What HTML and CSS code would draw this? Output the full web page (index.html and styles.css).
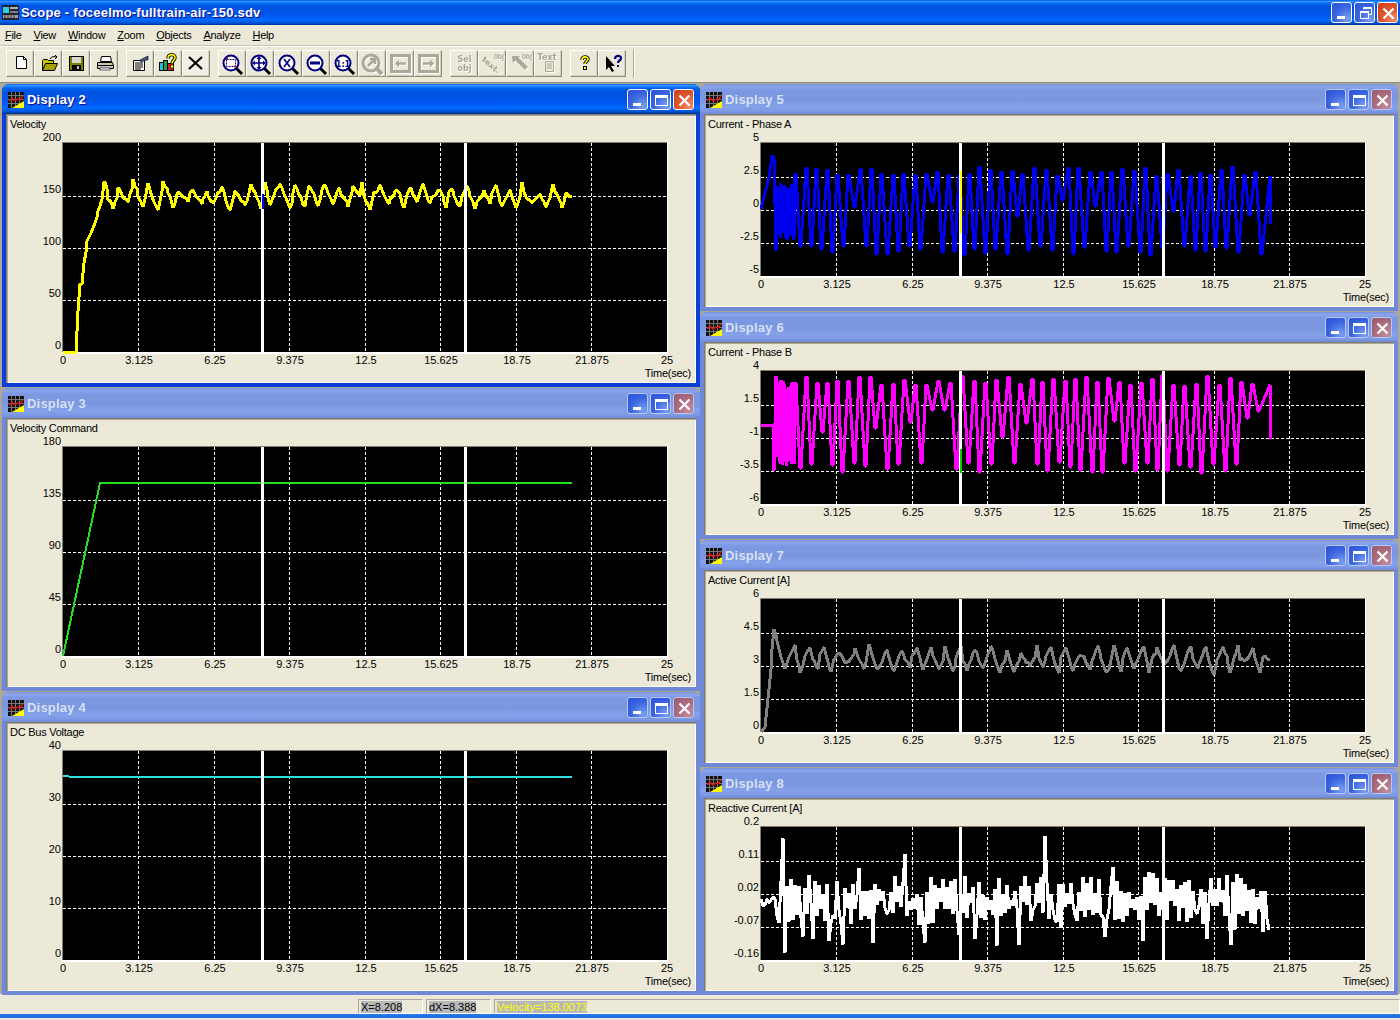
FILE: index.html
```html
<!DOCTYPE html>
<html lang="en">

<head>
    <meta charset="utf-8">
    <title>Scope - foceelmo-fulltrain-air-150.sdv</title>
    <link rel="stylesheet" href="styles.css">
</head>

<body>
    <svg class="defs" width="0" height="0">
        <symbol id="lens" viewBox="0 0 24 24">
            <path d="M15 16l6 6" stroke="#000" stroke-width="3" fill="none" />
            <circle cx="10" cy="11" r="7.5" fill="#fff" stroke="#000080" stroke-width="2" />
        </symbol>
        <symbol id="logo" viewBox="0 0 16 16">
            <rect width="16" height="16" fill="#111" />
            <path d="M0 3.5h16M0 7.5h16M0 11.5h16M3.5 0v16M7.5 0v16M11.5 0v16" stroke="#777" />
            <path d="M16 9v7H4z" fill="#ff0" />
            <path d="M1 9l3-3 3 3 3-2 2 1 3-4" stroke="#e01010" stroke-width="1.5" fill="none" />
        </symbol>
    </svg>

    <header class="titlebar">
        <svg class="app-icon" width="17" height="15" viewBox="0 0 17 15">
            <rect width="17" height="15" fill="#223" />
            <rect x="1" y="2" width="6" height="6" fill="#30d0d8" />
            <rect x="8" y="2" width="8" height="2" fill="#b0b0b0" />
            <rect x="8" y="6" width="8" height="2" fill="#808080" />
            <rect x="1" y="10" width="15" height="3" fill="#a0a0a0" />
            <path d="M3 10v3M6 10v3M9 10v3M12 10v3" stroke="#333" />
        </svg>
        <span class="app-title">Scope - foceelmo-fulltrain-air-150.sdv</span>
        <div class="controls app-controls">
            <button class="ctl"><svg width="21" height="21"><rect x="5" y="13" width="8" height="3" fill="#fff" /></svg></button>
            <button class="ctl"><svg width="21" height="21" fill="none" stroke="#fff"><rect x="5.5" y="8.5" width="8" height="7" /><path d="M5.5 9.5h8" /><path d="M8.5 6.5v-2h8v7h-3M8.5 5.5h8" /></svg></button>
            <button class="ctl ctl-close"><svg width="21" height="21"><path d="M5.5 5.5l10 10M15.5 5.5l-10 10" stroke="#fff" stroke-width="2.2" /></svg></button>
        </div>
    </header>

    <nav class="menu">
        <span><u>F</u>ile</span>
        <span><u>V</u>iew</span>
        <span><u>W</u>indow</span>
        <span><u>Z</u>oom</span>
        <span><u>O</u>bjects</span>
        <span><u>A</u>nalyze</span>
        <span><u>H</u>elp</span>
    </nav>

    <div class="toolbar">
        <div class="tool-group">
            <button class="tool"><svg viewBox="0 0 24 24"><path d="M7.5 4.5h7l3 3v9h-10z" fill="#fff" stroke="#000" /><path d="M14.500 4.500v3h3" fill="none" stroke="#000" /></svg></button>
            <button class="tool"><svg viewBox="0 0 24 24"><path d="M5.500 18.500v-10l1-1h4l1 1h5v3" fill="#c8c800" stroke="#000" /><path d="M5.500 18.500l3-7h12l-3 7z" fill="#a8a000" stroke="#000" /><path d="M13 7c1-2 3-3 6-2M18 3l2 2-2 2" fill="none" stroke="#000" /></svg></button>
            <button class="tool"><svg viewBox="0 0 24 24"><rect x="4.500" y="4.500" width="14" height="14" fill="#808000" stroke="#000" /><rect x="7" y="5" width="9" height="6" fill="#d8d8d0" /><rect x="7" y="13" width="9" height="5" fill="#000" /><rect x="12" y="14" width="2" height="3" fill="#c0c0c0" /></svg></button>
            <button class="tool"><svg viewBox="0 0 24 24"><path d="M8.500 4.500h9l1 5h-11z" fill="#fff" stroke="#000" /><path d="M4.500 10.500h15l1 3v3h-16v-3z" fill="#c8c8c0" stroke="#000" /><path d="M5 13.500h15" stroke="#000" /><rect x="7" y="16" width="10" height="2" fill="#fff" stroke="#000" stroke-width=".6" /><rect x="15" y="11.500" width="3" height="1" fill="#e0d000" /></svg></button>
        </div>
        <div class="tool-group">
            <button class="tool"><svg viewBox="0 0 24 24"><path d="M4.500 8.500h11v10h-11z" fill="#fff" stroke="#000" /><path d="M6 11h8M6 13h8M6 15h8M6 17h6" stroke="#000" /><path d="M11 8l6-3 2-1v4h-2l-5 2z" fill="#405890" stroke="#000" stroke-width=".6" /></svg></button>
            <button class="tool"><svg viewBox="0 0 24 24"><rect x="2.500" y="10.500" width="4" height="8" fill="#20c0d8" stroke="#000" /><rect x="6.500" y="8.500" width="4" height="10" fill="#20a040" stroke="#000" /><rect x="10.500" y="11.500" width="6" height="7" fill="#e01040" stroke="#000" /><path d="M11 6.500c0-5 7-5 7-1 0 3-3 3-3 6" fill="none" stroke="#000" stroke-width="3.400" /><path d="M11 6.500c0-5 7-5 7-1 0 3-3 3-3 6" fill="none" stroke="#ff0" stroke-width="1.600" /><rect x="13.500" y="13" width="3" height="3" fill="#ff0" stroke="#000" stroke-width=".6" /></svg></button>
            <button class="tool tool-x"><svg viewBox="0 0 24 24"><path d="M4 5l13 12M17 5L4 17" stroke="#000" stroke-width="2.200" /></svg></button>
        </div>
        <div class="tool-group">
            <button class="tool"><svg viewBox="0 0 24 24"><use href="#lens" /><rect x="5.500" y="7.500" width="9" height="7" fill="none" stroke="#000080" stroke-dasharray="2 1" /><path d="M5 6.500h2M6 5.500v2M13 14.500h2M14 13.500v2" stroke="#d00000" /></svg></button>
            <button class="tool"><svg viewBox="0 0 24 24"><use href="#lens" /><path d="M10 5v12M4 11h12" stroke="#000080" stroke-width="1.600" /><path d="M10 4l2.500 3h-5zM10 18l2.500-3h-5zM3 11l3-2.500v5zM17 11l-3-2.500v5z" fill="#000080" /></svg></button>
            <button class="tool"><svg viewBox="0 0 24 24"><use href="#lens" /><path d="M7 7l6 8M13 7l-6 8" stroke="#000080" stroke-width="1.600" /></svg></button>
            <button class="tool"><svg viewBox="0 0 24 24"><use href="#lens" /><rect x="5" y="9.500" width="10" height="3" fill="#000080" /></svg></button>
            <button class="tool"><svg viewBox="0 0 24 24"><use href="#lens" /><text x="10" y="14.500" class="tool-text tool-navy">1:1</text></svg></button>
            <button class="tool tool-off"><svg viewBox="0 0 24 24"><path d="M15 16l6 6" stroke="#aca899" stroke-width="4" /><circle cx="10" cy="11" r="8" fill="none" stroke="#aca899" stroke-width="3" /><path d="M7 14l6-6M9 7h5v5" fill="none" stroke="#aca899" stroke-width="2.500" /></svg></button>
            <button class="tool tool-off"><svg viewBox="0 0 24 24"><rect x="2.500" y="3.500" width="18" height="16" fill="none" stroke="#aca899" stroke-width="3" /><path d="M17 11.500H9" stroke="#aca899" stroke-width="2.500" /><path d="M6 11.500l4-4v8z" fill="#aca899" /></svg></button>
            <button class="tool tool-off"><svg viewBox="0 0 24 24"><rect x="2.500" y="3.500" width="18" height="16" fill="none" stroke="#aca899" stroke-width="3" /><path d="M6 11.500h8" stroke="#aca899" stroke-width="2.500" /><path d="M17 11.500l-4-4v8z" fill="#aca899" /></svg></button>
        </div>
        <div class="tool-group">
            <button class="tool tool-off"><svg viewBox="0 0 24 24"><text x="11.500" y="10" class="tool-text tool-grey">Sel</text><text x="11.500" y="19" class="tool-text tool-grey">obj</text></svg></button>
            <button class="tool tool-off"><svg viewBox="0 0 24 24"><text x="9" y="15" class="tool-text tool-grey" transform="rotate(42 9 12)">text</text><path d="M3 8l14 13" stroke="#aca899" /><text x="18" y="7" class="tool-tiny">0bj</text></svg></button>
            <button class="tool tool-off"><svg viewBox="0 0 24 24"><path d="M6 8l3-3 10 10-3 3z" fill="#aca899" /><path d="M3 4h8l-7 7z" fill="#aca899" /><text x="18" y="7" class="tool-tiny">0bj</text></svg></button>
            <button class="tool tool-off"><svg viewBox="0 0 24 24"><text x="10" y="8" class="tool-text tool-grey">Text</text><path d="M8.500 9.500h8v10h-8z" fill="#ece9d8" stroke="#aca899" /><path d="M10 12h5M10 14h5M10 16h5" stroke="#aca899" /></svg></button>
        </div>
        <div class="tool-group tool-end">
            <button class="tool"><svg viewBox="0 0 24 24"><path d="M9 8c0-4 6-4 6-1 0 2.500-3 2.500-3 5" fill="none" stroke="#000" stroke-width="3.400" /><path d="M9 8c0-4 6-4 6-1 0 2.500-3 2.500-3 5" fill="none" stroke="#ff0" stroke-width="1.600" /><rect x="10.500" y="14.500" width="3" height="3" fill="#ff0" stroke="#000" /></svg></button>
            <button class="tool"><svg viewBox="0 0 24 24"><path d="M5 4v14l3-3 3 5 2-1-3-5h4z" fill="#000" /><path d="M14 7c0-4 6-4 6-1 0 3-3 2-3 5" fill="none" stroke="#000080" stroke-width="2.200" /><rect x="16" y="13" width="2" height="2" fill="#000080" /></svg></button>
        </div>
    </div>

    <main class="workspace">
        <section class="column column-left"></section>
        <section class="column column-right"></section>
    </main>

    <footer class="statusbar">
        <div class="cell cell-x"><span>X=8.208</span></div>
        <div class="cell cell-x"><span>dX=8.388</span></div>
        <div class="cell cell-value"><span>Velocity=138.0073</span></div>
    </footer>
    <div class="taskstrip"></div>

    <template>
        <article class="win">
            <div class="win-title">
                <svg class="win-icon" width="16" height="16"><use href="#logo" /></svg>
                <h2></h2>
                <div class="controls">
                    <button class="ctl"><svg width="21" height="21"><rect x="5" y="13" width="8" height="3" fill="#fff" /></svg></button>
                    <button class="ctl"><svg width="21" height="21" fill="none" stroke="#fff"><rect x="4.500" y="5.500" width="12" height="10" /><path d="M4.500 6.500h12M4.500 7.500h12" /></svg></button>
                    <button class="ctl ctl-close"><svg width="21" height="21"><path d="M5.500 5.500l10 10M15.500 5.500l-10 10" stroke="#fff" stroke-width="2.200" /></svg></button>
                </div>
            </div>
            <div class="client"></div>
        </article>
    </template>

    <script src="app.js"></script>
</body>

</html>
```
FILE: styles.css
```css
* {
    box-sizing: border-box;
}

body {
    margin: 0;
    width: 1400px;
    height: 1020px;
    overflow: hidden;
    background-color: #ece9d8;
    font-family: "Liberation Sans", Arial, sans-serif;
    font-size: 11px;
    color: #000;
}

.defs {
    display: block;
    height: 0;
}

button {
    padding: 0;
    margin: 0;
    font: inherit;
}

svg {
    display: block;
}

/* main window */
.titlebar {
    display: flex;
    align-items: center;
    height: 25px;
    padding: 0 2px 1px 2px;
    background: linear-gradient(180deg, #0058ee 0%, #3593ff 6%, #127dff 10%, #0262ee 16%, #0057e5 22%, #0054e3 30%, #0055eb 58%, #005bf5 68%, #026afe 78%, #0062ef 86%, #0052d6 92%, #0040ab 96%, #003092 100%);
}

.app-title {
    margin-left: 2px;
    color: #fff;
    font-size: 13px;
    font-weight: bold;
    letter-spacing: 0.2px;
    text-shadow: 1px 1px #0f1089;
    white-space: nowrap;
}

.controls {
    display: flex;
    gap: 2px;
    margin-left: auto;
}

.ctl {
    width: 21px;
    height: 21px;
    border: 1px solid #fff;
    border-radius: 3px;
    background: radial-gradient(circle at 80% 85%, #7c9ff0 0%, #3a66e0 55%, #2a50d8 100%);
}

.ctl-close {
    background: radial-gradient(circle at 80% 85%, #f09070 0%, #e05a30 45%, #c83c18 100%);
}

.menu {
    display: flex;
    gap: 12px;
    align-items: center;
    height: 20px;
    padding-left: 5px;
    font-size: 11px;
    letter-spacing: -0.3px;
}

.toolbar {
    display: flex;
    gap: 8px;
    height: 37px;
    padding: 4px 0 0 6px;
    border-top: 1px solid #c8c5b4;
    box-shadow: inset 0 1px #fff;
}

.tool-group {
    display: flex;
}

.tool-end {
    padding-right: 7px;
    margin-top: -1px;
    height: 29px;
    padding-top: 1px;
    border-right: 1px solid #aca899;
    box-shadow: 1px 0 #fff;
}

.tool {
    width: 28px;
    height: 27px;
    padding: 1px 2px;
    background-color: #ece9d8;
    border: 1px solid;
    border-color: #fff #8e8b7a #8e8b7a #fff;
    box-shadow: inset -1px -1px #d4d0bf;
}

.tool svg {
    width: 24px;
    height: 24px;
    overflow: visible;
}

.tool-x {
    background-color: #f1efe4;
}

.tool-off svg {
    filter: drop-shadow(1px 1px 0 #fff);
}

.tool-text {
    font-family: "DejaVu Sans", sans-serif;
    font-size: 8px;
    font-weight: bold;
    text-anchor: middle;
}

.tool-navy {
    fill: #000080;
}

.tool-grey {
    fill: #a8a494;
}

.tool-tiny {
    font-size: 7px;
    font-weight: bold;
    fill: #a8a494;
    text-anchor: middle;
}

/* MDI children */
.workspace {
    display: grid;
    grid-template-columns: 698px 698px;
    height: 912px;
    padding: 1px 2px 0;
    background-color: #aca899;
    border-top: 1px solid #8e8b7a;
}

.column {
    display: flex;
    flex-direction: column;
    gap: 1px;
}

.win {
    display: flex;
    flex-direction: column;
    padding: 0 4px 4px;
    border-radius: 7px 7px 0 0;
    background-color: #7088d8;
}

.column-left .win {
    height: 303px;
}

.column-right .win {
    height: 227px;
}

.win-title {
    display: flex;
    align-items: center;
    flex: none;
    height: 30px;
    margin: 0 -4px;
    padding: 1px 6px 0 6px;
    border-radius: 7px 7px 0 0;
    background: linear-gradient(180deg, #7a8fdc 0%, #8aa6ec 8%, #7c98e2 20%, #7a97df 55%, #84a2ea 75%, #7d9ae4 90%, #7088d4 100%);
}

.win-icon {
    flex: none;
}

.win-title h2 {
    margin: 0 0 0 3px;
    color: #d8e0f6;
    font-size: 13px;
    font-weight: bold;
    letter-spacing: 0.2px;
}

.win-active {
    background-color: #0a3fd8;
}

.win-active .win-title {
    background: linear-gradient(180deg, #0058ee 0%, #3593ff 5%, #127dff 9%, #0262ee 14%, #0057e5 22%, #0054e3 30%, #0055eb 58%, #005bf5 68%, #026afe 78%, #0062ef 86%, #0052d6 92%, #0040ab 96%, #003092 100%);
}

.win-active .win-title h2 {
    color: #fff;
    text-shadow: 1px 1px #0f1089;
}

.win:not(.win-active) .ctl {
    border-color: #b8c8f4;
}

.win:not(.win-active) .ctl-close {
    background: radial-gradient(circle at 80% 85%, #c08c9c 0%, #a8687c 60%, #985870 100%);
}

.client {
    flex: 1;
    background-color: #ece9d8;
    box-shadow: inset 1px 1px #807d6c, inset 2px 2px #aca899, inset -1px -1px #fff;
}

.chart text {
    font-family: "Liberation Sans", Arial, sans-serif;
    font-size: 11px;
    fill: #000;
}

.chart .name {
    letter-spacing: -0.25px;
}

.chart .end {
    text-anchor: end;
}

.chart .mid {
    text-anchor: middle;
}

.grid {
    stroke: #fff;
    stroke-dasharray: 3 2;
    shape-rendering: crispEdges;
}

.trace {
    fill: none;
    stroke-linejoin: bevel;
    shape-rendering: crispEdges;
}

/* status */
.statusbar {
    display: flex;
    gap: 3px;
    height: 20px;
    padding: 5px 0 0 358px;
    background-color: #ece9d8;
}

.cell {
    height: 15px;
    padding: 1px 0 0 2px;
    border: 1px solid;
    border-color: #aca899 #fff #fff #aca899;
    line-height: 12px;
}

.cell-x {
    width: 65px;
}

.cell-value {
    flex: 1;
}

.cell span {
    display: inline-block;
    background-color: #b8b8b8;
}

.cell-value span {
    color: #ffff00;
}

.taskstrip {
    height: 4px;
    background: linear-gradient(180deg, #2a7ae8, #1a68dc);
}
```
FILE: app.js
```js
const charts = [
    { col: "left", title: "Display 2", label: "Velocity", y: ["200", "150", "100", "50", "0"], color: "#ffff00", width: 3, trace: velocity, active: true, mark: { color: "#0000ff", y1: 51, y2: 66 } },
    { col: "left", title: "Display 3", label: "Velocity Command", y: ["180", "135", "90", "45", "0"], color: "#20e020", width: 2, trace: command },
    { col: "left", title: "Display 4", label: "DC Bus Voltage", y: ["40", "30", "20", "10", "0"], color: "#30e0e0", width: 2, trace: bus },
    { col: "right", title: "Display 5", label: "Current - Phase A", y: ["5", "2.5", "0", "-2.5", "-5"], color: "#0000f0", width: 3, trace: phaseA, mark: { color: "#ffff00", y1: 28, y2: 90 } },
    { col: "right", title: "Display 6", label: "Current - Phase B", y: ["4", "1.5", "-1", "-3.5", "-6"], color: "#ff00ff", width: 3, trace: phaseB, mark: { color: "#00d000", y1: 78, y2: 102 } },
    { col: "right", title: "Display 7", label: "Active Current [A]", y: ["6", "4.5", "3", "1.5", "0"], color: "#808080", width: 3, trace: active },
    { col: "right", title: "Display 8", label: "Reactive Current [A]", y: ["0.2", "0.11", "0.02", "-0.07", "-0.16"], color: "#ffffff", width: 3, trace: reactive }
];

const xLabels = ["0", "3.125", "6.25", "9.375", "12.5", "15.625", "18.75", "21.875", "25"];
const END = 509;

// small seeded random, the curves must come out the same every time
function rng(seed) {
    return () => {
        seed = (seed * 1664525 + 1013904223) % 4294967296;
        return seed / 4294967296;
    };
}

// straight lines between points, stepped so it looks like the plotted samples
function sampled(points, step, seed) {
    const r = rng(seed);
    const out = [];
    for (let i = 0; i < points.length - 1; i++) {
        const [x1, y1] = points[i];
        const [x2, y2] = points[i + 1];
        const n = Math.max(1, Math.round((x2 - x1) / step));
        for (let k = 0; k < n; k++) {
            const jitter = x1 > 40 ? (r() - 0.5) * 4 : 0;
            out.push([Math.round(x1 + (x2 - x1) * k / n), Math.round(y1 + (y2 - y1) * k / n + jitter)]);
        }
    }
    out.push(points[points.length - 1]);
    return out;
}

// irregular humps between hi and lo, some with a smaller ripple after
function peaks(start, seed, hi, lo) {
    const r = rng(seed);
    const mid = (hi + lo) / 2;
    const points = [];
    let x = start;
    while (x < END - 12) {
        const a = x + 2 + r() * 2;
        const b = a + 3 + r() * 3;
        const c = b + 2 + r() * 3;
        points.push([x, hi + r() * r() * (mid - hi)]);
        points.push([a, mid - 2 + r() * 4]);
        points.push([b, lo - r() * r() * (lo - mid)]);
        points.push([c, mid - 3 + r() * 5]);
        x = c + 2 + r() * 4;
    }
    points.push([END, mid]);
    return points;
}

function velocity() {
    const start = [[0, 209], [13, 209], [15, 168], [17, 141], [19, 141], [21, 120], [24, 98], [28, 90], [32, 80], [35, 68], [37, 63], [40, 48]];
    const read = [[128, 130], [135, 125], [145, 170], [160, 205], [175, 145], [190, 165], [205, 185], [220, 120], [235, 165], [248, 198], [265, 132], [275, 170], [295, 205], [310, 125], [325, 150], [340, 205], [352, 155], [370, 165], [385, 180], [395, 140], [425, 190], [440, 155], [455, 185], [485, 140], [510, 212], [525, 150], [555, 195], [572, 130], [590, 170], [603, 205], [615, 130], [630, 190], [660, 125], [690, 205], [705, 135], [735, 200], [748, 130], [775, 195], [792, 130], [820, 190], [838, 145], [865, 195], [880, 135], [900, 165]];
    const middle = read.map(([x, y]) => [x / 3 - 3, y / 3 - 2]);
    return sampled(start.concat(middle, peaks(299, 7, 40, 66)), 2, 9);
}

function command() {
    return [[0, 209], [37, 36], [END, 36]];
}

function bus() {
    return [[0, 25], [12, 26], [END, 26]];
}

// swings about center, about 11px a period, a few stop short halfway
function wave(seed, center, amp, from) {
    const r = rng(seed);
    const out = [];
    let x = from;
    while (x < END - 10) {
        const top = Math.round(center - amp * (0.78 + r() * 0.22));
        out.push([x, top], [x + 1, top]);
        x += 5 + Math.round(r());
        const full = r() > 0.15;
        const low = full ? center + amp * (0.78 + r() * 0.22) : center + amp * (r() * 0.6 - 0.3);
        out.push([x, Math.round(low)], [x + 1, Math.round(low)]);
        x += 5 + Math.round(r());
    }
    out.push([END, center - amp * 0.8], [END, center + amp * 0.3]);
    return out;
}

function dense(seed, x1, x2, top, bottom) {
    const r = rng(seed);
    const out = [];
    for (let x = x1; x < x2; x++) {
        out.push([x, top + r() * 14]);
        out.push([x + 0.5, bottom - r() * 14]);
    }
    return out;
}

function phaseA() {
    const start = [[0, 66], [4, 50], [8, 34], [11, 13], [13, 15], [15, 108]];
    return start.concat(dense(3, 16, 34, 40, 100), wave(11, 68, 44, 34));
}

function phaseB() {
    const start = [[0, 54], [12, 54], [13, 100], [15, 5]];
    return start.concat(dense(5, 16, 34, 8, 96), wave(23, 53, 49, 34));
}

function active() {
    const start = [[0, 133], [4, 128], [8, 90], [13, 30], [16, 42], [20, 58], [24, 70], [28, 58]];
    return sampled(start.concat(peaks(34, 19, 46, 74)), 2, 31);
}

function reactive() {
    const r = rng(41);
    const spikes = { 22: 11, 42: 110, 52: 112, 68: 114, 98: 41, 144: 27, 164: 116, 198: 108, 214: 112, 284: 9, 258: 118, 352: 40, 470: 118, 446: 112 };
    const out = [];
    let side = 1;
    for (let x = 0; x <= END; x += 2) {
        let y;
        if (x < 16) {
            y = 70 + r() * 9;
        } else if (spikes[x]) {
            y = spikes[x];
        } else {
            side = -side;
            y = 72 + side * (2 + r() * 22) + Math.sin(x / 11) * 4;
            if (r() > 0.9) {
                y += 14 + r() * 22;
            }
        }
        out.push([x, Math.round(y)]);
    }
    return out;
}

function drawChart(chart, w, h) {
    const left = 57;
    const top = 29;
    const W = 604;
    const H = h - 60;
    let s = `<svg class="chart" width="${w}" height="${h}">`;
    s += `<text class="name" x="4" y="14">${chart.label}</text>`;
    s += `<rect x="${left - 1}" y="${top - 1}" width="${W + 2}" height="${H + 3}" fill="#fff" />`;
    s += `<path d="M${left - 0.5} ${top + H}V${top - 0.5}H${left + W}" stroke="#807d6c" fill="none" />`;
    s += `<rect x="${left}" y="${top}" width="${W}" height="${H}" fill="#000" />`;

    chart.y.forEach((label, i) => {
        const y = Math.ceil(top + H * i / 4);
        if (i > 0 && i < 4) {
            s += `<path class="grid" d="M${left} ${y}.5H${left + W}" />`;
        }
        s += `<text class="end" x="55" y="${i === 0 ? y - 2 : y - 3}">${label}</text>`;
    });

    xLabels.forEach((label, i) => {
        const x = Math.floor(left + W * i / 8);
        const inner = i > 0 && i < 8;
        if (inner) {
            s += `<path class="grid" d="M${x}.5 ${top}V${top + H}" />`;
        }
        s += `<text class="mid" x="${inner ? x + 1 : x}" y="${h - 19}">${label}</text>`;
    });

    s += `<text class="end name" x="685" y="${h - 6}">Time(sec)</text>`;

    const pts = chart.trace().map(([x, y]) => `${left + x},${top + y}`).join(" ");
    s += `<polyline class="trace" points="${pts}" stroke="${chart.color}" stroke-width="${chart.width}" />`;

    [199, 402].forEach((x) => {
        s += `<rect x="${left + x - 1}" y="${top}" width="3" height="${H}" fill="#fff" />`;
    });
    if (chart.mark) {
        s += `<rect x="${left + 199}" y="${top + chart.mark.y1}" width="2" height="${chart.mark.y2 - chart.mark.y1}" fill="${chart.mark.color}" />`;
    }
    return s + "</svg>";
}

function start() {
    const template = document.querySelector("template");
    charts.forEach((chart) => {
        const klon = template.content.cloneNode(true);
        const height = chart.col === "left" ? 269 : 193;
        klon.querySelector("h2").textContent = chart.title;
        klon.querySelector(".client").innerHTML = drawChart(chart, 690, height);
        if (chart.active) {
            klon.querySelector(".win").classList.add("win-active");
        }
        document.querySelector(".column-" + chart.col).appendChild(klon);
    });
}

document.addEventListener("DOMContentLoaded", start);
```
